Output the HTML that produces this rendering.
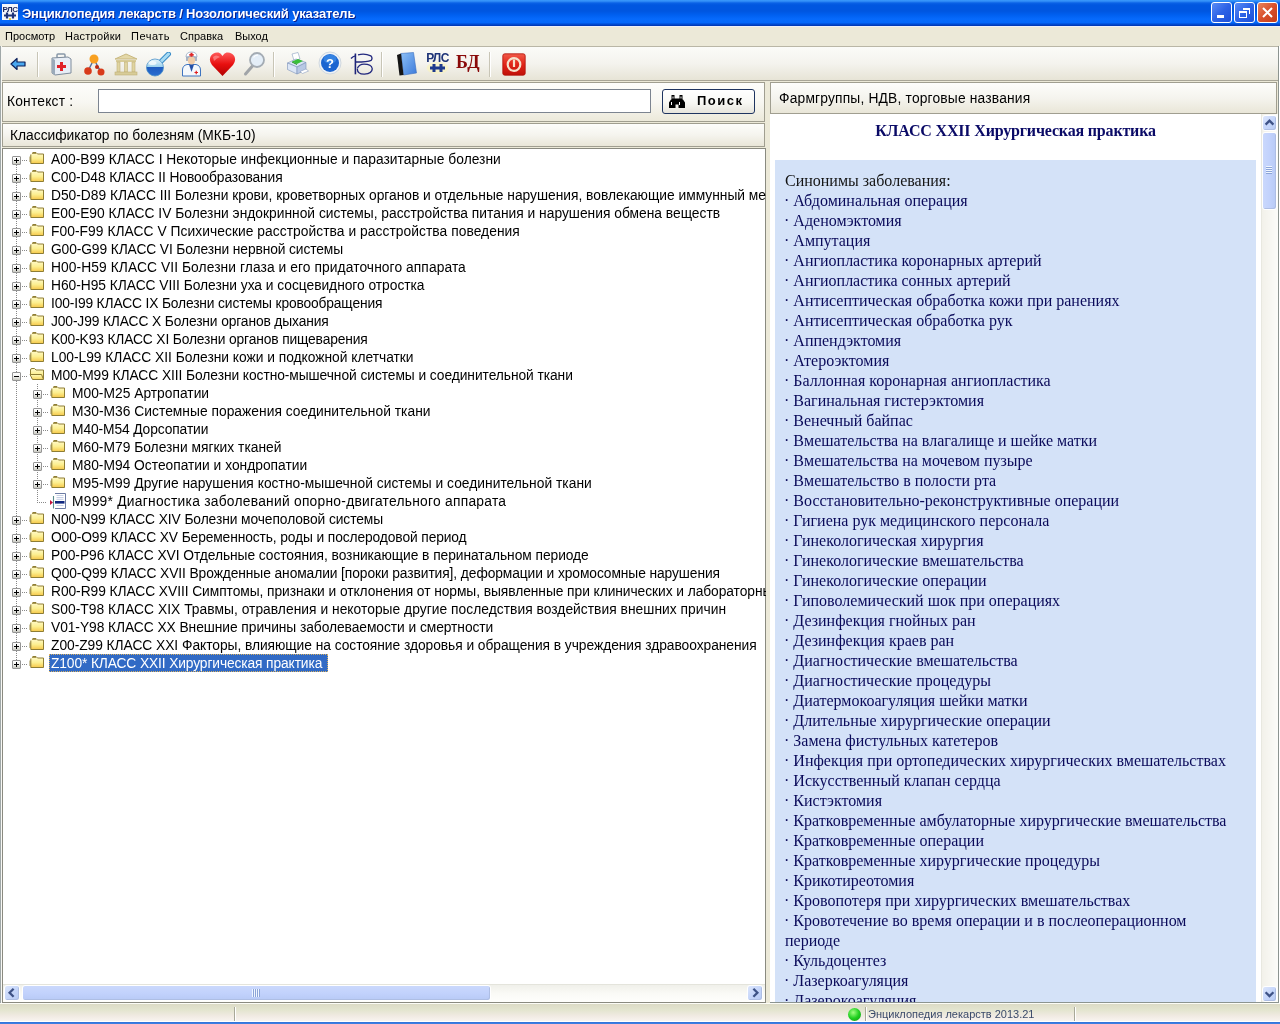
<!DOCTYPE html>
<html><head><meta charset="utf-8">
<style>
*{margin:0;padding:0;box-sizing:border-box}
html,body{width:1280px;height:1024px;overflow:hidden;background:#ECE9D8;font-family:"Liberation Sans",sans-serif}
body>*{will-change:transform}
.a{position:absolute}
#title{left:0;top:0;width:1280px;height:26px;background:linear-gradient(#3C9CFC 0,#2A86F4 1.5px,#0A62E6 3px,#0057E0 5px,#0056E0 11px,#0060F0 15px,#066AFC 19px,#0468FA 22.5px,#0050DA 24px,#003AB8 25.5px,#003AB8 26px)}
#title .t{left:22px;top:6px;color:#fff;font:bold 13px "Liberation Sans",sans-serif;letter-spacing:-0.15px;white-space:pre;text-shadow:1px 1px #0A1E8C}
.tb{top:2px;width:21px;height:21px;border:1px solid #fff;border-radius:3px;background:linear-gradient(135deg,#5A8CF6,#2D63E6 50%,#1C4FD8)}
#menu{left:0;top:26px;width:1280px;height:20px;background:#ECE9D8;border-top:1px solid #EEF0F8}
#menu span{position:absolute;top:3px;font:11px "Liberation Sans",sans-serif;color:#000;white-space:pre}
#toolbar{left:0;top:46px;width:1280px;height:35px;background:linear-gradient(#FBFBF8,#F4F3EE 50%,#E7E4D6);border-top:1px solid #B9B6A6;border-bottom:1px solid #A8A597}
.sep{top:5px;width:2px;height:25px;border-left:1px solid #C8C5B6;border-right:1px solid #fff}
.ico{top:7px;width:24px;height:24px}
.sbtn{border-radius:3px;background:linear-gradient(135deg,#DCE6FC,#C6D6FA 50%,#B8CAF4);border:1px solid #fff;box-shadow:inset -1px -1px 0 #AEBEE4}
.panelhdr{background:linear-gradient(#FDFDFB,#F5F4EE 50%,#E9E6D8);border:1px solid #A09E90}
.txt{font:13px "Liberation Sans",sans-serif;color:#000;white-space:pre}
#tree{left:2px;top:148px;width:764px;height:855px;background:#fff;border:1px solid #7F9DB9;border-color:#8A8A80}
.row{position:absolute;height:18px;font:13.8px "Liberation Sans",sans-serif;letter-spacing:-0.05px;white-space:pre;color:#000;line-height:18px}
.exp{position:absolute;width:9px;height:9px;border:1px solid #959595;border-radius:1px;background:linear-gradient(#fff,#F4F4F2 45%,#C8C8C0)}
.sel{position:absolute;background:#316AC5;outline:1px dotted #D8B060;outline-offset:-1px}
.exp:before{content:"";position:absolute;left:1px;top:3px;width:5px;height:1px;background:#000}
.exp.p:after{content:"";position:absolute;left:3px;top:1px;width:1px;height:5px;background:#000}
.vd{position:absolute;width:1px;background:repeating-linear-gradient(#888 0 1px,transparent 1px 2px)}
.hd{position:absolute;height:1px;background:repeating-linear-gradient(90deg,#888 0 1px,transparent 1px 2px)}
.fold{position:absolute}
#rc{left:770px;top:114px;width:510px;height:890px;background:#fff}
.li{position:absolute;left:784px;font:16px "Liberation Serif",serif;color:#0A0A5A;white-space:pre;line-height:20px}
</style></head><body>

<!-- TITLE BAR -->
<div id="title" class="a">
  <svg class="a" style="left:2px;top:4px" width="16" height="16" viewBox="0 0 16 16">
    <rect x="0" y="0" width="16" height="16" fill="#F4F6FA"/>
    <text x="8" y="7.5" text-anchor="middle" font-family="Liberation Sans" font-weight="bold" font-size="8" letter-spacing="-0.4" fill="#1E2A60">РЛС</text>
    <path d="M2 11.5h6M5 8.5v6M8 11.5h6M11 8.5v6" stroke="#1E3478" stroke-width="2.2"/>
    <rect x="7" y="14" width="2" height="2" fill="#E8D040"/>
  </svg>
  <div class="a t">Энциклопедия лекарств / Нозологический указатель</div>
  <div class="a tb" style="left:1211px"><div class="a" style="left:5px;top:12px;width:7px;height:3px;background:#fff"></div></div>
  <div class="a tb" style="left:1234px"><div class="a" style="left:4px;top:8px;width:8px;height:7px;border:1px solid #fff;border-top-width:2px"></div><div class="a" style="left:8px;top:5px;width:7px;height:6px;border-top:2px solid #fff;border-right:1px solid #fff"></div></div>
  <div class="a tb" style="left:1257px;background:linear-gradient(135deg,#E9835C,#D8502B 50%,#C43D1A)"><svg class="a" style="left:3px;top:3px" width="13" height="13"><path d="M2 2L11 11M11 2L2 11" stroke="#fff" stroke-width="2"/></svg></div>
</div>

<!-- MENU -->
<div id="menu" class="a">
  <span style="left:5px">Просмотр</span>
  <span style="left:65px;letter-spacing:0.25px">Настройки</span>
  <span style="left:131px;letter-spacing:0.5px">Печать</span>
  <span style="left:180px">Справка</span>
  <span style="left:235px">Выход</span>
</div>

<!-- TOOLBAR -->
<div id="toolbar" class="a">
  <!-- back arrow -->
  <svg class="a" style="left:10px;top:8px" width="18" height="18" viewBox="0 0 18 18"><path d="M1 9L7 3.5V7H15V11H7V14.5Z" fill="#49A8F0" stroke="#0B1F5A" stroke-width="1.2" stroke-linejoin="round"/></svg>
  <div class="a sep" style="left:37px"></div>
  <!-- first-aid kit -->
  <svg class="a" style="left:50px;top:5px" width="24" height="24" viewBox="0 0 24 24"><rect x="7" y="2" width="8" height="4" rx="1" fill="none" stroke="#8898A8" stroke-width="1.5"/><path d="M2 6L18 5L21 7V21L5 23L2 21Z" fill="#E8EEF6" stroke="#7E8C9C"/><path d="M2 6V21L5 23V8Z" fill="#9AAABA"/><path d="M10 10h3v3h3v3h-3v3h-3v-3H7v-3h3z" fill="#E0222A"/></svg>
  <!-- molecule -->
  <svg class="a" style="left:82px;top:5px" width="24" height="24" viewBox="0 0 24 24"><path d="M12 7L6 19M12 7L16 15M16 15L19 20" stroke="#5670A0" stroke-width="1.5"/><circle cx="12" cy="7" r="4.5" fill="#F8A020"/><circle cx="6" cy="19" r="3.8" fill="#D83A1A"/><circle cx="19" cy="20" r="3.5" fill="#D83A1A"/><circle cx="15" cy="15" r="2" fill="#C02A10"/></svg>
  <!-- columns -->
  <svg class="a" style="left:113px;top:5px" width="26" height="24" viewBox="0 0 26 24"><path d="M2 7L13 2L24 7Z" fill="#E4D8A8" stroke="#C8B880"/><rect x="3" y="8" width="20" height="2" fill="#D8CC98"/><rect x="4" y="10" width="3" height="10" fill="#E0D4A0" stroke="#C0B078" stroke-width=".6"/><rect x="11.5" y="10" width="3" height="10" fill="#E0D4A0" stroke="#C0B078" stroke-width=".6"/><rect x="19" y="10" width="3" height="10" fill="#E0D4A0" stroke="#C0B078" stroke-width=".6"/><rect x="2" y="20" width="22" height="3" fill="#D8CC98" stroke="#C0B078" stroke-width=".6"/></svg>
  <!-- flask -->
  <svg class="a" style="left:145px;top:5px" width="27" height="25" viewBox="0 0 27 25"><defs><linearGradient id="flg" x1="0" y1="0" x2="0" y2="1"><stop offset="0" stop-color="#E8F6FC"/><stop offset=".45" stop-color="#9ED2EE"/><stop offset=".5" stop-color="#1E5CC0"/><stop offset="1" stop-color="#2A6ED0"/></linearGradient></defs><path d="M15.5 10L23.5 2" stroke="#3A8CC8" stroke-width="5" stroke-linecap="round"/><path d="M15.5 10L23.5 2" stroke="#A8DCF4" stroke-width="3" stroke-linecap="round"/><circle cx="10" cy="15.5" r="8.5" fill="url(#flg)" stroke="#4A90C8" stroke-width=".8"/><ellipse cx="7.5" cy="11" rx="4" ry="2" fill="#fff" opacity=".7"/></svg>
  <!-- doctor -->
  <svg class="a" style="left:181px;top:4px" width="21" height="26" viewBox="0 0 21 26"><path d="M1.5 25V19Q1.5 14.5 6 13.5H15Q19.5 14.5 19.5 19V25Z" fill="#F4F8FC" stroke="#3E74C0" stroke-width="1"/><path d="M8 13.5L10.5 21L13 13.5Z" fill="#2450A8"/><path d="M5 6Q5 2 10.5 1.5Q16 2 16 6V10H5Z" fill="#A8B4C4"/><ellipse cx="10.5" cy="9.5" rx="3.6" ry="4" fill="#F0CCA8"/><path d="M5 6Q5 1 10.5 1Q16 1 16 6Q10.5 4.5 5 6Z" fill="#fff" stroke="#8CA0BC" stroke-width=".7"/><path d="M9.5 1.8h2v1.2h1.2v1.8h-1.2v1h-2v-1h-1.2v-1.8h1.2z" fill="#E02828"/><path d="M13.5 21.5h3.5M15.25 19.8v3.5" stroke="#E02020" stroke-width="1.2"/></svg>
  <!-- heart -->
  <svg class="a" style="left:209px;top:4px" width="27" height="26" viewBox="0 0 27 26"><defs><linearGradient id="hg" x1="0" y1="0" x2="0" y2="1"><stop offset="0" stop-color="#FF5A5A"/><stop offset=".5" stop-color="#E81010"/><stop offset="1" stop-color="#B00000"/></linearGradient></defs><path d="M13.5 25L3 14Q-0.5 9.5 1.8 5Q4.5 0.8 9.5 1.5Q12 2 13.5 5Q15 2 17.5 1.5Q22.5 0.8 25.2 5Q27.5 9.5 24 14Z" fill="url(#hg)"/><path d="M4 6Q7 3 11 6Q8 7 5 10Z" fill="#FFA0A0" opacity=".6"/></svg>
  <!-- magnifier -->
  <svg class="a" style="left:242px;top:4px" width="24" height="26" viewBox="0 0 24 26"><path d="M10.5 15L3.5 23" stroke="#A0A4A8" stroke-width="3" stroke-linecap="round"/><circle cx="15" cy="9" r="7" fill="#E4EEF8" stroke="#A4ACB4" stroke-width="1.8"/><path d="M11.5 6.5Q13 4 16 4" stroke="#fff" stroke-width="1.2" fill="none"/></svg>
  <div class="a sep" style="left:273px"></div>
  <!-- printer -->
  <svg class="a" style="left:286px;top:5px" width="24" height="24" viewBox="0 0 24 24"><path d="M6 2L12 0.5L14 7L8 8.5Z" fill="#fff" stroke="#8AA0C0" stroke-width=".6"/><path d="M1.5 11L10 7L20 10.5L11 15Z" fill="#D8E4F4" stroke="#7A90B8" stroke-width=".6"/><path d="M1.5 11V17.5L11 22V15Z" fill="#DCE6F6" stroke="#7A90B8" stroke-width=".6"/><path d="M11 15V22L20 18V10.5Z" fill="#B8C8E4" stroke="#7A90B8" stroke-width=".6"/><path d="M6 9.5L12 7L17 9L11 12Z" fill="#38C038"/><path d="M6 9.5L11 12V13L6 10.5Z" fill="#209020"/><path d="M14 19.5L20 17L22.5 19L16.5 21.5Z" fill="#fff" stroke="#7A90B8" stroke-width=".5"/></svg>
  <!-- help -->
  <svg class="a" style="left:318px;top:4px" width="24" height="24" viewBox="0 0 24 24"><circle cx="12" cy="12" r="11" fill="#EEF2F6" stroke="#D0D8E0"/><circle cx="12" cy="12" r="9" fill="#1A64D0"/><ellipse cx="12" cy="8" rx="6.5" ry="4.5" fill="#4A9AF0" opacity=".55"/><text x="12" y="17" text-anchor="middle" font-family="Liberation Sans" font-weight="bold" font-size="13" fill="#fff">?</text></svg>
  <!-- script B -->
  <svg class="a" style="left:349px;top:6px" width="26" height="24" viewBox="0 0 26 24"><path d="M6.4 0.5V21.3" stroke="#1E2478" stroke-width="1.6"/><path d="M2 5.5Q4 3.2 6.4 2.8M9 1.8Q16 0.2 21.8 2.8Q24 5 22.2 7.3Q18.5 9 7 9M8.3 15.5Q10 11.2 15 11.2Q22.5 11.2 23.2 15.5Q23.5 20.5 15.5 21.2Q8.5 21.4 8.3 16" fill="none" stroke="#22287E" stroke-width="1.3"/></svg>
  <div class="a sep" style="left:381px"></div>
  <!-- book -->
  <svg class="a" style="left:396px;top:5px" width="22" height="24" viewBox="0 0 22 24"><defs><linearGradient id="bkg" x1="0" y1="0" x2="1" y2="1"><stop offset="0" stop-color="#8CC0F6"/><stop offset="1" stop-color="#3C7ADA"/></linearGradient></defs><path d="M5 1.5L17.5 0.5L20.5 21L7.5 23Z" fill="url(#bkg)" stroke="#3A6EC0" stroke-width=".6"/><path d="M1 3L5 1.5L7.5 23L3.5 23.5Z" fill="#141414"/></svg>
  <!-- RLS logo -->
  <svg class="a" style="left:424px;top:4px" width="28" height="24" viewBox="0 0 28 24"><ellipse cx="13.5" cy="17" rx="11" ry="6" fill="#FAF4C0" opacity=".7"/><text x="13.5" y="11" text-anchor="middle" font-family="Liberation Sans" font-weight="bold" font-size="12" letter-spacing="-0.6" fill="#1E3478">РЛС</text><path d="M6 17h8M10 13v8M13 17h8M17 13v8" stroke="#1E3A8E" stroke-width="3"/></svg>
  <!-- BD -->
  <div class="a" style="left:456px;top:5px;font:bold 18px/20px 'Liberation Serif',serif;color:#8A0A0A;letter-spacing:0px">БД</div>
  <div class="a sep" style="left:489px"></div>
  <!-- power -->
  <svg class="a" style="left:502px;top:6px" width="24" height="23" viewBox="0 0 24 23"><defs><linearGradient id="pwg" x1="0" y1="0" x2="0" y2="1"><stop offset="0" stop-color="#F25A48"/><stop offset=".5" stop-color="#E02418"/><stop offset="1" stop-color="#C01008"/></linearGradient></defs><rect x="0.8" y="0.8" width="22.4" height="21.4" rx="2" fill="url(#pwg)" stroke="#B01008" stroke-width=".8"/><circle cx="12" cy="11.5" r="6.3" fill="none" stroke="#F6E2CC" stroke-width="2.2"/><path d="M12 6.5V14" stroke="#F6E2CC" stroke-width="2.2"/></svg>
</div>

<!-- LEFT: context panel -->
<div class="a panelhdr" style="left:2px;top:82px;width:763px;height:40px;background:linear-gradient(#FDFDFB,#F8F7F2 50%,#ECE9DA)"></div>
<div class="a txt" style="left:7px;top:94px;font-size:13.8px;letter-spacing:0.2px">Контекст :</div>
<div class="a" style="left:98px;top:89px;width:553px;height:24px;background:#fff;border:1px solid #7C8490"></div>
<div class="a" style="left:662px;top:89px;width:93px;height:25px;border:1px solid #1E3460;border-radius:3px;background:linear-gradient(#FFFFFF,#F8F8F4 55%,#E6E4DC)"></div>
<svg class="a" style="left:669px;top:95px" width="16" height="13" viewBox="0 0 16 13"><path d="M2.5 0h3v3.5h5V0h3v4.5h0.5l2 3V13H9.5V9.5h-3V13H0V7.5l2-3h0.5z" fill="#000"/><rect x="2" y="7" width="1" height="3" fill="#fff"/><rect x="10" y="7" width="1" height="3" fill="#fff"/><rect x="3.5" y="1.5" width="1" height="2" fill="#fff"/><rect x="11.5" y="1.5" width="1" height="2" fill="#fff"/></svg>
<div class="a" style="left:697px;top:93px;font:bold 13px 'Liberation Sans',sans-serif;color:#000;letter-spacing:1.5px">Поиск</div>

<!-- classifier header -->
<div class="a panelhdr" style="left:2px;top:123px;width:763px;height:24px"></div>
<div class="a txt" style="left:10px;top:128px;font-size:13.8px">Классификатор по болезням (МКБ-10)</div>

<!-- TREE -->
<div id="tree" class="a"></div>
<div id="rows"><svg width="0" height="0" style="position:absolute"><defs><linearGradient id="fg" x1="0" y1="0" x2="0" y2="1"><stop offset="0" stop-color="#FFFBD0"/><stop offset=".55" stop-color="#FCEF90"/><stop offset="1" stop-color="#F6C84A"/></linearGradient><linearGradient id="fg2" x1="0" y1="0" x2="0" y2="1"><stop offset="0" stop-color="#FFFCB8"/><stop offset="1" stop-color="#F8D660"/></linearGradient></defs></svg>
<div class="vd" style="left:16px;top:165px;height:495px"></div>
<div class="vd" style="left:37px;top:384px;height:118px"></div>
<div class="exp p" style="left:12px;top:156px"></div>
<div class="hd" style="left:22px;top:160px;width:6px"></div>
<svg class="fold" style="left:29px;top:152px" width="16" height="13" viewBox="0 0 16 13"><path d="M1 4.5V10" stroke="#9C8C48" stroke-width="1"/><path d="M3.5 0.5H7L8.5 2H14.5V11.5H1.8V2.5" fill="url(#fg)" stroke="#8E7D34" stroke-width="1"/><path d="M3 1.5H7" stroke="#A89850" stroke-width="1"/></svg>
<div class="row" style="left:51px;top:151px;width:715px;overflow:hidden;letter-spacing:0.027px">A00-B99 КЛАСС I Некоторые инфекционные и паразитарные болезни</div>
<div class="exp p" style="left:12px;top:174px"></div>
<div class="hd" style="left:22px;top:178px;width:6px"></div>
<svg class="fold" style="left:29px;top:170px" width="16" height="13" viewBox="0 0 16 13"><path d="M1 4.5V10" stroke="#9C8C48" stroke-width="1"/><path d="M3.5 0.5H7L8.5 2H14.5V11.5H1.8V2.5" fill="url(#fg)" stroke="#8E7D34" stroke-width="1"/><path d="M3 1.5H7" stroke="#A89850" stroke-width="1"/></svg>
<div class="row" style="left:51px;top:169px;width:715px;overflow:hidden;letter-spacing:-0.108px">C00-D48 КЛАСС II Новообразования</div>
<div class="exp p" style="left:12px;top:192px"></div>
<div class="hd" style="left:22px;top:196px;width:6px"></div>
<svg class="fold" style="left:29px;top:188px" width="16" height="13" viewBox="0 0 16 13"><path d="M1 4.5V10" stroke="#9C8C48" stroke-width="1"/><path d="M3.5 0.5H7L8.5 2H14.5V11.5H1.8V2.5" fill="url(#fg)" stroke="#8E7D34" stroke-width="1"/><path d="M3 1.5H7" stroke="#A89850" stroke-width="1"/></svg>
<div class="row" style="left:51px;top:187px;width:715px;overflow:hidden;letter-spacing:-0.010px">D50-D89 КЛАСС III Болезни крови, кроветворных органов и отдельные нарушения, вовлекающие иммунный механизм</div>
<div class="exp p" style="left:12px;top:210px"></div>
<div class="hd" style="left:22px;top:214px;width:6px"></div>
<svg class="fold" style="left:29px;top:206px" width="16" height="13" viewBox="0 0 16 13"><path d="M1 4.5V10" stroke="#9C8C48" stroke-width="1"/><path d="M3.5 0.5H7L8.5 2H14.5V11.5H1.8V2.5" fill="url(#fg)" stroke="#8E7D34" stroke-width="1"/><path d="M3 1.5H7" stroke="#A89850" stroke-width="1"/></svg>
<div class="row" style="left:51px;top:205px;width:715px;overflow:hidden;letter-spacing:0.005px">E00-E90 КЛАСС IV Болезни эндокринной системы, расстройства питания и нарушения обмена веществ</div>
<div class="exp p" style="left:12px;top:228px"></div>
<div class="hd" style="left:22px;top:232px;width:6px"></div>
<svg class="fold" style="left:29px;top:224px" width="16" height="13" viewBox="0 0 16 13"><path d="M1 4.5V10" stroke="#9C8C48" stroke-width="1"/><path d="M3.5 0.5H7L8.5 2H14.5V11.5H1.8V2.5" fill="url(#fg)" stroke="#8E7D34" stroke-width="1"/><path d="M3 1.5H7" stroke="#A89850" stroke-width="1"/></svg>
<div class="row" style="left:51px;top:223px;width:715px;overflow:hidden;letter-spacing:0.052px">F00-F99 КЛАСС V Психические расстройства и расстройства поведения</div>
<div class="exp p" style="left:12px;top:246px"></div>
<div class="hd" style="left:22px;top:250px;width:6px"></div>
<svg class="fold" style="left:29px;top:242px" width="16" height="13" viewBox="0 0 16 13"><path d="M1 4.5V10" stroke="#9C8C48" stroke-width="1"/><path d="M3.5 0.5H7L8.5 2H14.5V11.5H1.8V2.5" fill="url(#fg)" stroke="#8E7D34" stroke-width="1"/><path d="M3 1.5H7" stroke="#A89850" stroke-width="1"/></svg>
<div class="row" style="left:51px;top:241px;width:715px;overflow:hidden;letter-spacing:-0.109px">G00-G99 КЛАСС VI Болезни нервной системы</div>
<div class="exp p" style="left:12px;top:264px"></div>
<div class="hd" style="left:22px;top:268px;width:6px"></div>
<svg class="fold" style="left:29px;top:260px" width="16" height="13" viewBox="0 0 16 13"><path d="M1 4.5V10" stroke="#9C8C48" stroke-width="1"/><path d="M3.5 0.5H7L8.5 2H14.5V11.5H1.8V2.5" fill="url(#fg)" stroke="#8E7D34" stroke-width="1"/><path d="M3 1.5H7" stroke="#A89850" stroke-width="1"/></svg>
<div class="row" style="left:51px;top:259px;width:715px;overflow:hidden;letter-spacing:0.081px">H00-H59 КЛАСС VII Болезни глаза и его придаточного аппарата</div>
<div class="exp p" style="left:12px;top:282px"></div>
<div class="hd" style="left:22px;top:286px;width:6px"></div>
<svg class="fold" style="left:29px;top:278px" width="16" height="13" viewBox="0 0 16 13"><path d="M1 4.5V10" stroke="#9C8C48" stroke-width="1"/><path d="M3.5 0.5H7L8.5 2H14.5V11.5H1.8V2.5" fill="url(#fg)" stroke="#8E7D34" stroke-width="1"/><path d="M3 1.5H7" stroke="#A89850" stroke-width="1"/></svg>
<div class="row" style="left:51px;top:277px;width:715px;overflow:hidden;letter-spacing:-0.033px">H60-H95 КЛАСС VIII Болезни уха и сосцевидного отростка</div>
<div class="exp p" style="left:12px;top:300px"></div>
<div class="hd" style="left:22px;top:304px;width:6px"></div>
<svg class="fold" style="left:29px;top:296px" width="16" height="13" viewBox="0 0 16 13"><path d="M1 4.5V10" stroke="#9C8C48" stroke-width="1"/><path d="M3.5 0.5H7L8.5 2H14.5V11.5H1.8V2.5" fill="url(#fg)" stroke="#8E7D34" stroke-width="1"/><path d="M3 1.5H7" stroke="#A89850" stroke-width="1"/></svg>
<div class="row" style="left:51px;top:295px;width:715px;overflow:hidden;letter-spacing:-0.146px">I00-I99 КЛАСС IX Болезни системы кровообращения</div>
<div class="exp p" style="left:12px;top:318px"></div>
<div class="hd" style="left:22px;top:322px;width:6px"></div>
<svg class="fold" style="left:29px;top:314px" width="16" height="13" viewBox="0 0 16 13"><path d="M1 4.5V10" stroke="#9C8C48" stroke-width="1"/><path d="M3.5 0.5H7L8.5 2H14.5V11.5H1.8V2.5" fill="url(#fg)" stroke="#8E7D34" stroke-width="1"/><path d="M3 1.5H7" stroke="#A89850" stroke-width="1"/></svg>
<div class="row" style="left:51px;top:313px;width:715px;overflow:hidden;letter-spacing:-0.121px">J00-J99 КЛАСС X Болезни органов дыхания</div>
<div class="exp p" style="left:12px;top:336px"></div>
<div class="hd" style="left:22px;top:340px;width:6px"></div>
<svg class="fold" style="left:29px;top:332px" width="16" height="13" viewBox="0 0 16 13"><path d="M1 4.5V10" stroke="#9C8C48" stroke-width="1"/><path d="M3.5 0.5H7L8.5 2H14.5V11.5H1.8V2.5" fill="url(#fg)" stroke="#8E7D34" stroke-width="1"/><path d="M3 1.5H7" stroke="#A89850" stroke-width="1"/></svg>
<div class="row" style="left:51px;top:331px;width:715px;overflow:hidden;letter-spacing:-0.138px">K00-K93 КЛАСС XI Болезни органов пищеварения</div>
<div class="exp p" style="left:12px;top:354px"></div>
<div class="hd" style="left:22px;top:358px;width:6px"></div>
<svg class="fold" style="left:29px;top:350px" width="16" height="13" viewBox="0 0 16 13"><path d="M1 4.5V10" stroke="#9C8C48" stroke-width="1"/><path d="M3.5 0.5H7L8.5 2H14.5V11.5H1.8V2.5" fill="url(#fg)" stroke="#8E7D34" stroke-width="1"/><path d="M3 1.5H7" stroke="#A89850" stroke-width="1"/></svg>
<div class="row" style="left:51px;top:349px;width:715px;overflow:hidden;letter-spacing:-0.015px">L00-L99 КЛАСС XII Болезни кожи и подкожной клетчатки</div>
<div class="exp " style="left:12px;top:372px"></div>
<div class="hd" style="left:22px;top:376px;width:6px"></div>
<svg class="fold" style="left:29px;top:368px" width="16" height="13" viewBox="0 0 16 13"><path d="M1.5 6V2Q1.5 0.5 3 0.5H5.5L7 2H14.5V11" fill="url(#fg)" stroke="#8E7D34" stroke-width="1"/><path d="M1 6.5H12.5L14.5 11.5H3.5Z" fill="url(#fg2)" stroke="#8E7D34" stroke-width="1"/></svg>
<div class="row" style="left:51px;top:367px;width:715px;overflow:hidden;letter-spacing:-0.069px">M00-M99 КЛАСС XIII Болезни костно-мышечной системы и соединительной ткани</div>
<div class="exp p" style="left:33px;top:390px"></div>
<div class="hd" style="left:43px;top:394px;width:6px"></div>
<svg class="fold" style="left:50px;top:386px" width="16" height="13" viewBox="0 0 16 13"><path d="M1 4.5V10" stroke="#9C8C48" stroke-width="1"/><path d="M3.5 0.5H7L8.5 2H14.5V11.5H1.8V2.5" fill="url(#fg)" stroke="#8E7D34" stroke-width="1"/><path d="M3 1.5H7" stroke="#A89850" stroke-width="1"/></svg>
<div class="row" style="left:72px;top:385px;width:694px;overflow:hidden;letter-spacing:0.009px">M00-M25 Артропатии</div>
<div class="exp p" style="left:33px;top:408px"></div>
<div class="hd" style="left:43px;top:412px;width:6px"></div>
<svg class="fold" style="left:50px;top:404px" width="16" height="13" viewBox="0 0 16 13"><path d="M1 4.5V10" stroke="#9C8C48" stroke-width="1"/><path d="M3.5 0.5H7L8.5 2H14.5V11.5H1.8V2.5" fill="url(#fg)" stroke="#8E7D34" stroke-width="1"/><path d="M3 1.5H7" stroke="#A89850" stroke-width="1"/></svg>
<div class="row" style="left:72px;top:403px;width:694px;overflow:hidden;letter-spacing:0.024px">M30-M36 Системные поражения соединительной ткани</div>
<div class="exp p" style="left:33px;top:426px"></div>
<div class="hd" style="left:43px;top:430px;width:6px"></div>
<svg class="fold" style="left:50px;top:422px" width="16" height="13" viewBox="0 0 16 13"><path d="M1 4.5V10" stroke="#9C8C48" stroke-width="1"/><path d="M3.5 0.5H7L8.5 2H14.5V11.5H1.8V2.5" fill="url(#fg)" stroke="#8E7D34" stroke-width="1"/><path d="M3 1.5H7" stroke="#A89850" stroke-width="1"/></svg>
<div class="row" style="left:72px;top:421px;width:694px;overflow:hidden;letter-spacing:-0.109px">M40-M54 Дорсопатии</div>
<div class="exp p" style="left:33px;top:444px"></div>
<div class="hd" style="left:43px;top:448px;width:6px"></div>
<svg class="fold" style="left:50px;top:440px" width="16" height="13" viewBox="0 0 16 13"><path d="M1 4.5V10" stroke="#9C8C48" stroke-width="1"/><path d="M3.5 0.5H7L8.5 2H14.5V11.5H1.8V2.5" fill="url(#fg)" stroke="#8E7D34" stroke-width="1"/><path d="M3 1.5H7" stroke="#A89850" stroke-width="1"/></svg>
<div class="row" style="left:72px;top:439px;width:694px;overflow:hidden;letter-spacing:0.007px">M60-M79 Болезни мягких тканей</div>
<div class="exp p" style="left:33px;top:462px"></div>
<div class="hd" style="left:43px;top:466px;width:6px"></div>
<svg class="fold" style="left:50px;top:458px" width="16" height="13" viewBox="0 0 16 13"><path d="M1 4.5V10" stroke="#9C8C48" stroke-width="1"/><path d="M3.5 0.5H7L8.5 2H14.5V11.5H1.8V2.5" fill="url(#fg)" stroke="#8E7D34" stroke-width="1"/><path d="M3 1.5H7" stroke="#A89850" stroke-width="1"/></svg>
<div class="row" style="left:72px;top:457px;width:694px;overflow:hidden;letter-spacing:-0.002px">M80-M94 Остеопатии и хондропатии</div>
<div class="exp p" style="left:33px;top:480px"></div>
<div class="hd" style="left:43px;top:484px;width:6px"></div>
<svg class="fold" style="left:50px;top:476px" width="16" height="13" viewBox="0 0 16 13"><path d="M1 4.5V10" stroke="#9C8C48" stroke-width="1"/><path d="M3.5 0.5H7L8.5 2H14.5V11.5H1.8V2.5" fill="url(#fg)" stroke="#8E7D34" stroke-width="1"/><path d="M3 1.5H7" stroke="#A89850" stroke-width="1"/></svg>
<div class="row" style="left:72px;top:475px;width:694px;overflow:hidden;letter-spacing:0.021px">M95-M99 Другие нарушения костно-мышечной системы и соединительной ткани</div>
<div class="hd" style="left:37px;top:502px;width:10px"></div>
<svg class="fold" style="left:50px;top:493px;width:17px;height:17px" width="17" height="17" viewBox="0 0 17 17"><path d="M5 0.5H15.5V15.5H5" fill="#fff" stroke="#6C7CA4" stroke-width="1"/><path d="M3.5 3V15.5" stroke="#5A8C8C" stroke-width="1.1"/><path d="M6.5 2.5H13.5M6.5 4.5H13.5M6.5 6.3H13.5M6.5 12.5H13.5" stroke="#B8C4E0" stroke-width="0.8"/><rect x="5" y="8" width="9.5" height="2.6" fill="#102880"/><path d="M0 7L3 9.5L0 12Z" fill="#C0103A"/></svg>
<div class="row" style="left:72px;top:493px;width:694px;overflow:hidden;letter-spacing:0.257px">M999* Диагностика заболеваний опорно-двигательного аппарата</div>
<div class="exp p" style="left:12px;top:516px"></div>
<div class="hd" style="left:22px;top:520px;width:6px"></div>
<svg class="fold" style="left:29px;top:512px" width="16" height="13" viewBox="0 0 16 13"><path d="M1 4.5V10" stroke="#9C8C48" stroke-width="1"/><path d="M3.5 0.5H7L8.5 2H14.5V11.5H1.8V2.5" fill="url(#fg)" stroke="#8E7D34" stroke-width="1"/><path d="M3 1.5H7" stroke="#A89850" stroke-width="1"/></svg>
<div class="row" style="left:51px;top:511px;width:715px;overflow:hidden;letter-spacing:-0.082px">N00-N99 КЛАСС XIV Болезни мочеполовой системы</div>
<div class="exp p" style="left:12px;top:534px"></div>
<div class="hd" style="left:22px;top:538px;width:6px"></div>
<svg class="fold" style="left:29px;top:530px" width="16" height="13" viewBox="0 0 16 13"><path d="M1 4.5V10" stroke="#9C8C48" stroke-width="1"/><path d="M3.5 0.5H7L8.5 2H14.5V11.5H1.8V2.5" fill="url(#fg)" stroke="#8E7D34" stroke-width="1"/><path d="M3 1.5H7" stroke="#A89850" stroke-width="1"/></svg>
<div class="row" style="left:51px;top:529px;width:715px;overflow:hidden;letter-spacing:-0.114px">O00-O99 КЛАСС XV Беременность, роды и послеродовой период</div>
<div class="exp p" style="left:12px;top:552px"></div>
<div class="hd" style="left:22px;top:556px;width:6px"></div>
<svg class="fold" style="left:29px;top:548px" width="16" height="13" viewBox="0 0 16 13"><path d="M1 4.5V10" stroke="#9C8C48" stroke-width="1"/><path d="M3.5 0.5H7L8.5 2H14.5V11.5H1.8V2.5" fill="url(#fg)" stroke="#8E7D34" stroke-width="1"/><path d="M3 1.5H7" stroke="#A89850" stroke-width="1"/></svg>
<div class="row" style="left:51px;top:547px;width:715px;overflow:hidden;letter-spacing:-0.060px">P00-P96 КЛАСС XVI Отдельные состояния, возникающие в перинатальном периоде</div>
<div class="exp p" style="left:12px;top:570px"></div>
<div class="hd" style="left:22px;top:574px;width:6px"></div>
<svg class="fold" style="left:29px;top:566px" width="16" height="13" viewBox="0 0 16 13"><path d="M1 4.5V10" stroke="#9C8C48" stroke-width="1"/><path d="M3.5 0.5H7L8.5 2H14.5V11.5H1.8V2.5" fill="url(#fg)" stroke="#8E7D34" stroke-width="1"/><path d="M3 1.5H7" stroke="#A89850" stroke-width="1"/></svg>
<div class="row" style="left:51px;top:565px;width:715px;overflow:hidden;letter-spacing:-0.091px">Q00-Q99 КЛАСС XVII Врожденные аномалии [пороки развития], деформации и хромосомные нарушения</div>
<div class="exp p" style="left:12px;top:588px"></div>
<div class="hd" style="left:22px;top:592px;width:6px"></div>
<svg class="fold" style="left:29px;top:584px" width="16" height="13" viewBox="0 0 16 13"><path d="M1 4.5V10" stroke="#9C8C48" stroke-width="1"/><path d="M3.5 0.5H7L8.5 2H14.5V11.5H1.8V2.5" fill="url(#fg)" stroke="#8E7D34" stroke-width="1"/><path d="M3 1.5H7" stroke="#A89850" stroke-width="1"/></svg>
<div class="row" style="left:51px;top:583px;width:715px;overflow:hidden;letter-spacing:-0.067px">R00-R99 КЛАСС XVIII Симптомы, признаки и отклонения от нормы, выявленные при клинических и лабораторных исследованиях</div>
<div class="exp p" style="left:12px;top:606px"></div>
<div class="hd" style="left:22px;top:610px;width:6px"></div>
<svg class="fold" style="left:29px;top:602px" width="16" height="13" viewBox="0 0 16 13"><path d="M1 4.5V10" stroke="#9C8C48" stroke-width="1"/><path d="M3.5 0.5H7L8.5 2H14.5V11.5H1.8V2.5" fill="url(#fg)" stroke="#8E7D34" stroke-width="1"/><path d="M3 1.5H7" stroke="#A89850" stroke-width="1"/></svg>
<div class="row" style="left:51px;top:601px;width:715px;overflow:hidden;letter-spacing:0.032px">S00-T98 КЛАСС XIX Травмы, отравления и некоторые другие последствия воздействия внешних причин</div>
<div class="exp p" style="left:12px;top:624px"></div>
<div class="hd" style="left:22px;top:628px;width:6px"></div>
<svg class="fold" style="left:29px;top:620px" width="16" height="13" viewBox="0 0 16 13"><path d="M1 4.5V10" stroke="#9C8C48" stroke-width="1"/><path d="M3.5 0.5H7L8.5 2H14.5V11.5H1.8V2.5" fill="url(#fg)" stroke="#8E7D34" stroke-width="1"/><path d="M3 1.5H7" stroke="#A89850" stroke-width="1"/></svg>
<div class="row" style="left:51px;top:619px;width:715px;overflow:hidden;letter-spacing:-0.062px">V01-Y98 КЛАСС XX Внешние причины заболеваемости и смертности</div>
<div class="exp p" style="left:12px;top:642px"></div>
<div class="hd" style="left:22px;top:646px;width:6px"></div>
<svg class="fold" style="left:29px;top:638px" width="16" height="13" viewBox="0 0 16 13"><path d="M1 4.5V10" stroke="#9C8C48" stroke-width="1"/><path d="M3.5 0.5H7L8.5 2H14.5V11.5H1.8V2.5" fill="url(#fg)" stroke="#8E7D34" stroke-width="1"/><path d="M3 1.5H7" stroke="#A89850" stroke-width="1"/></svg>
<div class="row" style="left:51px;top:637px;width:715px;overflow:hidden;letter-spacing:-0.048px">Z00-Z99 КЛАСС XXI Факторы, влияющие на состояние здоровья и обращения в учреждения здравоохранения</div>
<div class="exp p" style="left:12px;top:660px"></div>
<div class="hd" style="left:22px;top:664px;width:6px"></div>
<svg class="fold" style="left:29px;top:656px" width="16" height="13" viewBox="0 0 16 13"><path d="M1 4.5V10" stroke="#9C8C48" stroke-width="1"/><path d="M3.5 0.5H7L8.5 2H14.5V11.5H1.8V2.5" fill="url(#fg)" stroke="#8E7D34" stroke-width="1"/><path d="M3 1.5H7" stroke="#A89850" stroke-width="1"/></svg>
<div class="sel" style="left:49px;top:654px;width:279px;height:18px"></div><div class="row" style="left:51px;top:655px;color:#fff;letter-spacing:-0.124px">Z100* КЛАСС XXII Хирургическая практика</div></div>

<!-- h scrollbar -->
<div class="a" style="left:3px;top:984px;width:762px;height:18px;background:linear-gradient(#F0F0EA,#FAFAF6 50%,#FEFEFC);border-top:1px solid #E4E4DC"></div>
<div class="a sbtn" style="left:4px;top:985px;width:16px;height:16px"></div>
<svg class="a" style="left:4px;top:985px" width="16" height="16"><path d="M9.6 3.8L5.6 7.8L9.6 11.8" fill="none" stroke="#3E5286" stroke-width="2.3"/></svg>
<div class="a sbtn" style="left:22px;top:985px;width:469px;height:16px;background:linear-gradient(#CAD8FC,#C2D2FC 50%,#B8CAF6)"></div>
<svg class="a" style="left:251px;top:988px" width="10" height="10"><path d="M1.5 1V9M3.5 1V9M5.5 1V9M7.5 1V9" stroke="#F0F6FF" stroke-width="1"/><path d="M2.5 1V9M4.5 1V9M6.5 1V9M8.5 1V9" stroke="#8CA4D8" stroke-width="1"/></svg>
<div class="a sbtn" style="left:747px;top:985px;width:16px;height:16px"></div>
<svg class="a" style="left:747px;top:985px" width="16" height="16"><path d="M6.4 3.8L10.4 7.8L6.4 11.8" fill="none" stroke="#3E5286" stroke-width="2.3"/></svg>

<!-- RIGHT PANEL -->
<div class="a panelhdr" style="left:770px;top:82px;width:507px;height:32px"></div>
<div class="a txt" style="left:779px;top:91px;font-size:13.8px;letter-spacing:0.18px">Фармгруппы, НДВ, торговые названия</div>
<div id="rc" class="a"></div>
<div class="a" style="left:775px;top:160px;width:481px;height:844px;background:#D4E2F8"></div>
<div class="a" style="left:770px;top:122px;width:491px;text-align:center;font:bold 16px 'Liberation Serif',serif;color:#0A0A66;letter-spacing:-0.17px;white-space:pre">КЛАСС XXII Хирургическая практика</div>
<div id="list" class="a" style="left:0;top:0;width:1280px;height:1003px;overflow:hidden"><div class="li" style="top:171px;left:785px;color:#141414">Синонимы заболевания:</div>
<div class="li" style="top:191px">· Абдоминальная операция</div>
<div class="li" style="top:211px">· Аденомэктомия</div>
<div class="li" style="top:231px">· Ампутация</div>
<div class="li" style="top:251px">· Ангиопластика коронарных артерий</div>
<div class="li" style="top:271px">· Ангиопластика сонных артерий</div>
<div class="li" style="top:291px">· Антисептическая обработка кожи при ранениях</div>
<div class="li" style="top:311px">· Антисептическая обработка рук</div>
<div class="li" style="top:331px">· Аппендэктомия</div>
<div class="li" style="top:351px">· Атероэктомия</div>
<div class="li" style="top:371px">· Баллонная коронарная ангиопластика</div>
<div class="li" style="top:391px">· Вагинальная гистерэктомия</div>
<div class="li" style="top:411px">· Венечный байпас</div>
<div class="li" style="top:431px">· Вмешательства на влагалище и шейке матки</div>
<div class="li" style="top:451px">· Вмешательства на мочевом пузыре</div>
<div class="li" style="top:471px">· Вмешательство в полости рта</div>
<div class="li" style="top:491px">· Восстановительно-реконструктивные операции</div>
<div class="li" style="top:511px">· Гигиена рук медицинского персонала</div>
<div class="li" style="top:531px">· Гинекологическая хирургия</div>
<div class="li" style="top:551px">· Гинекологические вмешательства</div>
<div class="li" style="top:571px">· Гинекологические операции</div>
<div class="li" style="top:591px">· Гиповолемический шок при операциях</div>
<div class="li" style="top:611px">· Дезинфекция гнойных ран</div>
<div class="li" style="top:631px">· Дезинфекция краев ран</div>
<div class="li" style="top:651px">· Диагностические вмешательства</div>
<div class="li" style="top:671px">· Диагностические процедуры</div>
<div class="li" style="top:691px">· Диатермокоагуляция шейки матки</div>
<div class="li" style="top:711px">· Длительные хирургические операции</div>
<div class="li" style="top:731px">· Замена фистульных катетеров</div>
<div class="li" style="top:751px">· Инфекция при ортопедических хирургических вмешательствах</div>
<div class="li" style="top:771px">· Искусственный клапан сердца</div>
<div class="li" style="top:791px">· Кистэктомия</div>
<div class="li" style="top:811px">· Кратковременные амбулаторные хирургические вмешательства</div>
<div class="li" style="top:831px">· Кратковременные операции</div>
<div class="li" style="top:851px">· Кратковременные хирургические процедуры</div>
<div class="li" style="top:871px">· Крикотиреотомия</div>
<div class="li" style="top:891px">· Кровопотеря при хирургических вмешательствах</div>
<div class="li" style="top:911px">· Кровотечение во время операции и в послеоперационном</div>
<div class="li" style="top:931px;left:785px">периоде</div>
<div class="li" style="top:951px">· Кульдоцентез</div>
<div class="li" style="top:971px">· Лазеркоагуляция</div>
<div class="li" style="top:991px">· Лазерокоагуляция</div></div>

<!-- v scrollbar -->
<div class="a" style="left:1261px;top:114px;width:17px;height:889px;background:linear-gradient(90deg,#F2F1EA,#FCFCF9);border-left:1px solid #E8E8E0"></div>
<div class="a sbtn" style="left:1262px;top:115px;width:15px;height:16px"></div>
<svg class="a" style="left:1262px;top:115px" width="15" height="16"><path d="M3.6 9.6L7.5 5.7L11.4 9.6" fill="none" stroke="#3E5286" stroke-width="2.3"/></svg>
<div class="a sbtn" style="left:1262px;top:132px;width:15px;height:78px;background:linear-gradient(90deg,#CAD8FC,#C2D2FC 50%,#B8CAF6)"></div>
<svg class="a" style="left:1264px;top:165px" width="10" height="11"><path d="M2 1.5H8M2 3.5H8M2 5.5H8M2 7.5H8" stroke="#F0F6FF"/><path d="M2 2.5H8M2 4.5H8M2 6.5H8M2 8.5H8" stroke="#8CA4D8"/></svg>
<div class="a sbtn" style="left:1262px;top:986px;width:15px;height:16px"></div>
<svg class="a" style="left:1262px;top:986px" width="15" height="16"><path d="M3.6 6.2L7.5 10.1L11.4 6.2" fill="none" stroke="#3E5286" stroke-width="2.3"/></svg>

<div class="a" style="left:1278px;top:46px;width:1px;height:957px;background:#8C9490"></div>
<div class="a" style="left:770px;top:1002px;width:509px;height:1px;background:#8C9490"></div>
<div class="a" style="left:0;top:46px;width:1px;height:957px;background:#A0A8A8"></div>
<div class="a" style="left:1px;top:46px;width:1px;height:957px;background:#F8F8F4"></div>
<div class="a" style="left:1279px;top:46px;width:1px;height:957px;background:#fff"></div>
<!-- STATUS BAR -->
<div class="a" style="left:0;top:1003px;width:1280px;height:1px;background:#FCFCF6"></div>
<div class="a" style="left:0;top:1004px;width:1280px;height:18px;background:linear-gradient(#DCDBC6,#E4E5D0 35%,#F0EAE2 65%,#FAF6F2)"></div>
<div class="a" style="left:0;top:1021px;width:1280px;height:1px;background:#FFFFFF"></div>
<div class="a" style="left:234px;top:1007px;width:2px;height:14px;border-left:1px solid #A8A898;border-right:1px solid #fff"></div>
<div class="a" style="left:865px;top:1007px;width:2px;height:14px;border-left:1px solid #A8A898;border-right:1px solid #fff"></div>
<div class="a" style="left:1074px;top:1007px;width:2px;height:14px;border-left:1px solid #A8A898;border-right:1px solid #fff"></div>
<div class="a" style="left:848px;top:1008px;width:13px;height:13px;border-radius:50%;background:radial-gradient(circle at 40% 35%,#A0FF80,#20D020 50%,#109010)"></div>
<div class="a" style="left:868px;top:1008px;font:11px 'Liberation Sans',sans-serif;color:#3A4A6A;white-space:pre">Энциклопедия лекарств 2013.21</div>
<div class="a" style="left:0;top:1022px;width:1280px;height:2px;background:linear-gradient(#3070D8,#4084E4)"></div>

</body></html>
